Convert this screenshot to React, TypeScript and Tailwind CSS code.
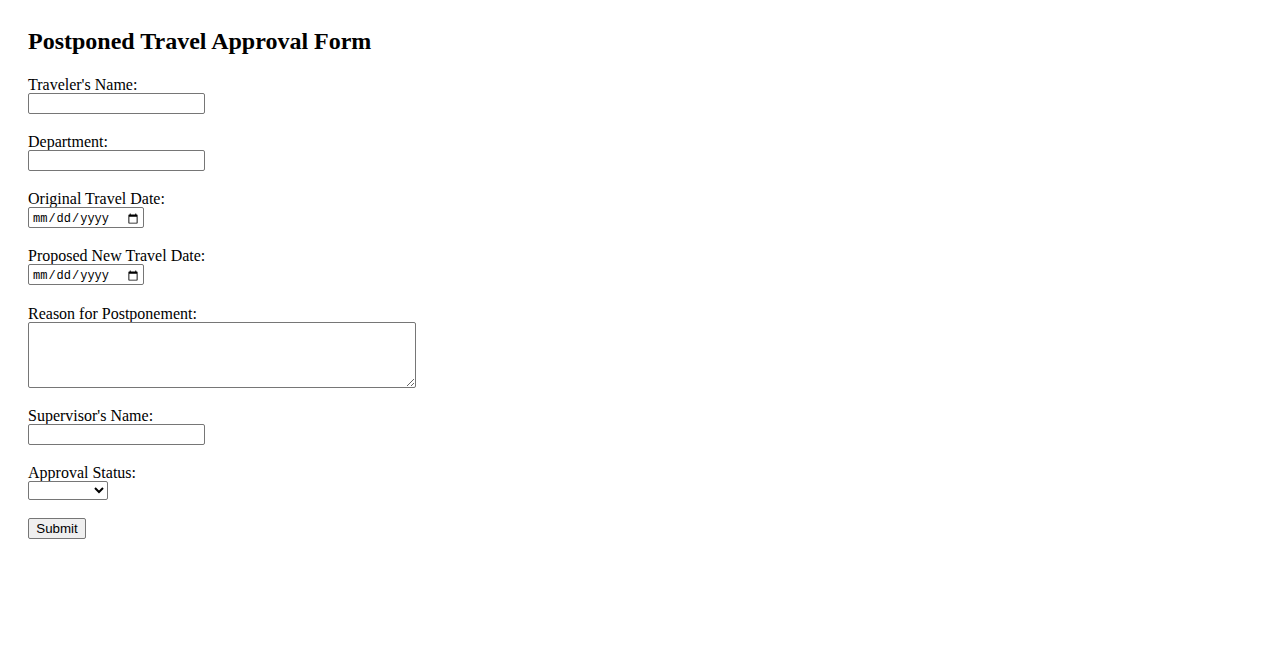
import React from "react";

const serif = { fontFamily: '"Liberation Serif", "Times New Roman", serif' };

function Field({ label, children }: { label: string; children: React.ReactNode }) {
  return (
    <div className="flex flex-col items-start mb-[18px]">
      <label className="block h-[18px] text-[16px] leading-[20px] text-black">{label}</label>
      {children}
    </div>
  );
}

const textInput =
  "block w-[177px] h-[21px] px-[2px] py-[1px] border border-[#767676] rounded-[2px] bg-white text-[13.33px] font-['Liberation_Sans',Arial,sans-serif] outline-none";
const dateInput =
  "block w-[116px] h-[21px] pl-[3px] pr-[2px] pt-[2px] pb-0 border border-[#767676] rounded-[2px] bg-white text-[12px] text-black font-['Liberation_Mono',monospace] outline-none";

export default function App() {
  return (
    <div className="min-h-[650px] bg-white pl-[28px] pt-[28px]" style={serif}>
      <h2 className="text-[24px] font-bold leading-[27px] mb-[20px] text-black">
        Postponed Travel Approval Form
      </h2>
      <form className="flex flex-col items-start" onSubmit={(e) => e.preventDefault()}>
        <Field label="Traveler's Name:">
          <input type="text" className={textInput} />
        </Field>
        <Field label="Department:">
          <input type="text" className={textInput} />
        </Field>
        <Field label="Original Travel Date:">
          <input type="date" className={dateInput} />
        </Field>
        <Field label="Proposed New Travel Date:">
          <input type="date" className={dateInput} />
        </Field>
        <div className="flex flex-col items-start mb-[18px] mt-[1px]">
          <label className="block h-[18px] text-[16px] leading-[20px] text-black">Reason for Postponement:</label>
          <textarea className="block w-[388px] h-[66px] px-[2px] py-[2px] border border-[#767676] rounded-[2px] bg-white resize text-[13.33px] font-['Liberation_Mono',monospace] outline-none" />
        </div>
        <Field label="Supervisor's Name:">
          <input type="text" className={textInput} />
        </Field>
        <Field label="Approval Status:">
          <select className="block w-[80px] h-[19px] border border-[#767676] rounded-[2px] bg-white text-[13.33px] font-['Liberation_Sans',Arial,sans-serif] outline-none">
            <option value=""></option>
            <option value="approved">Approved</option>
            <option value="rejected">Rejected</option>
            <option value="pending">Pending</option>
          </select>
        </Field>
        <button
          type="submit"
          className="w-[58px] h-[21px] px-[6px] border border-[#767676] rounded-[2px] bg-[#efefef] text-[13.33px] text-black font-['Liberation_Sans',Arial,sans-serif] leading-none"
        >
          Submit
        </button>
      </form>
    </div>
  );
}
